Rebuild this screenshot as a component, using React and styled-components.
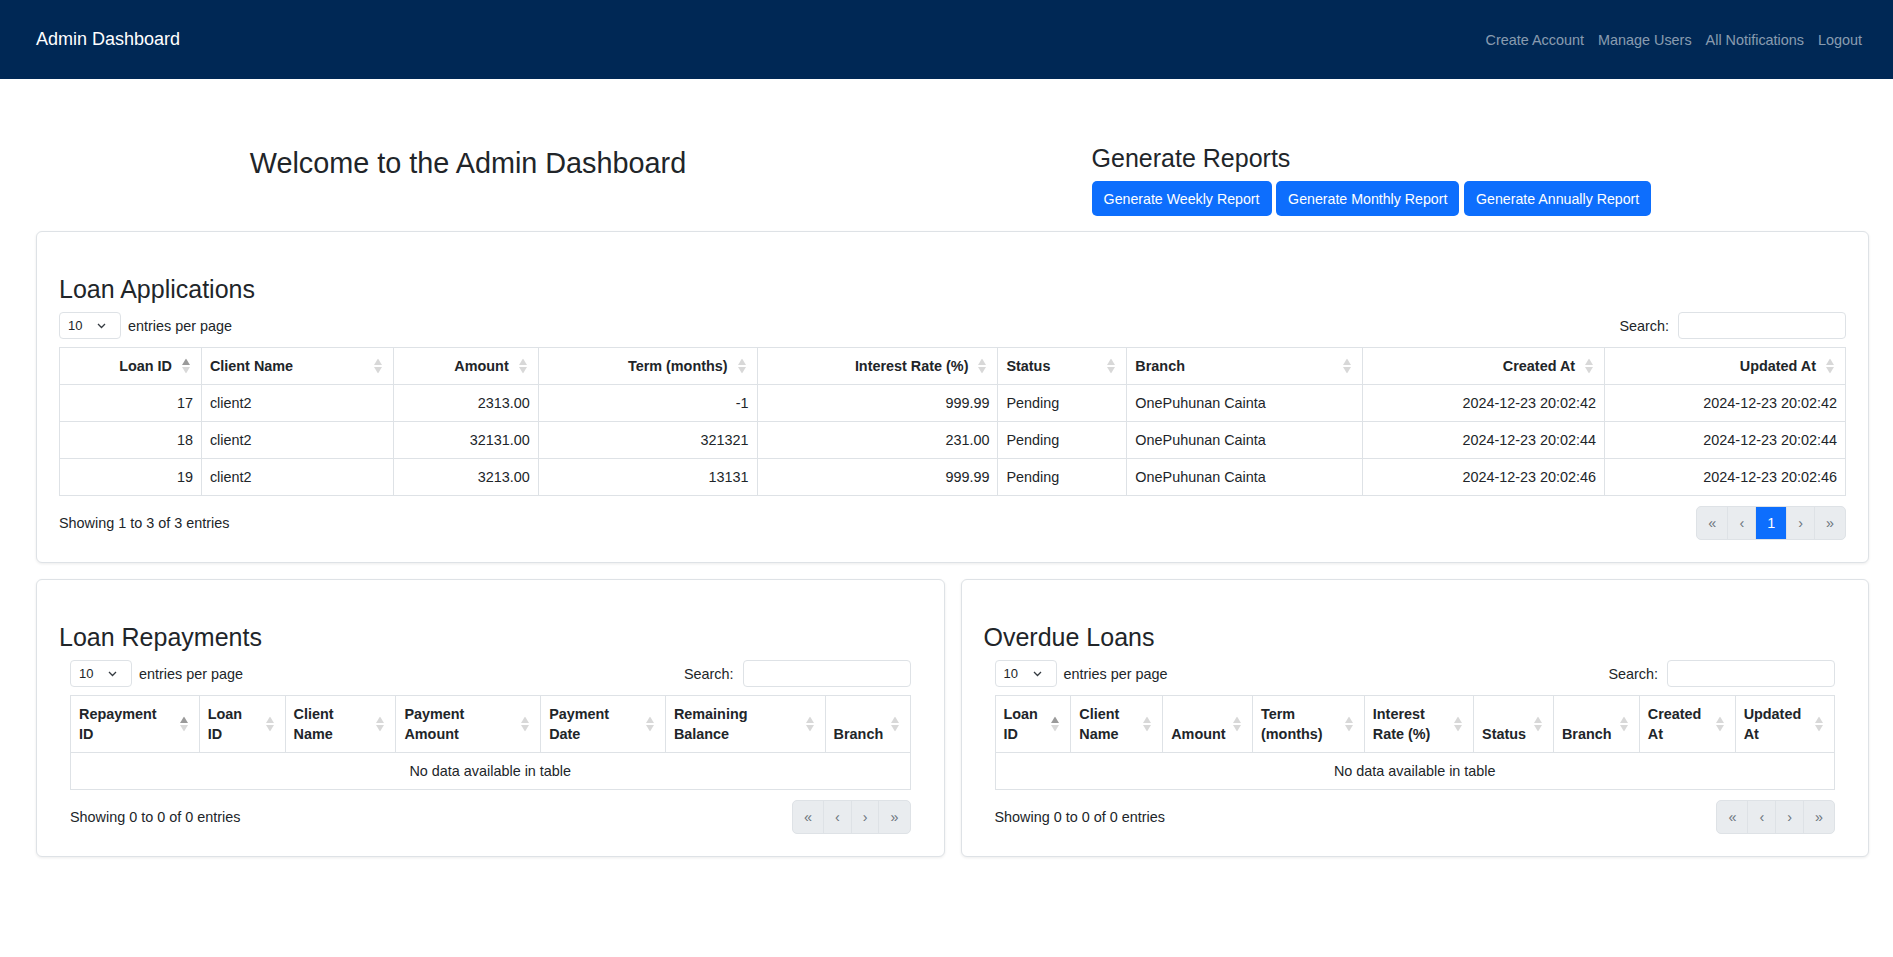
import React from 'react';
import styled, { createGlobalStyle } from 'styled-components';

const GlobalStyle = createGlobalStyle`
  * { box-sizing: border-box; }
  body {
    margin: 0;
    background: #fff;
    color: #212529;
    font-family: "Liberation Sans", Arial, sans-serif;
  }
`;

const Navbar = styled.nav`
  height: 79px;
  background: #002855;
  display: flex;
  align-items: center;
  justify-content: space-between;
  padding: 0 24px 0 36px;
`;

const Brand = styled.span`
  color: #fff;
  font-size: 18px;
`;

const NavLinks = styled.div`
  display: flex;
`;

const NavLink = styled.a`
  color: rgba(255, 255, 255, 0.55);
  font-size: 14.4px;
  padding: 0 7px;
  text-decoration: none;
`;

const Main = styled.main`
  padding: 64px 24px 40px 36px;
`;

const Hero = styled.section`
  display: flex;
  justify-content: space-around;
  align-items: flex-start;
  padding: 0 15px 0 11px;
`;

const Welcome = styled.h2`
  margin: 3px 0 0;
  font-size: 28.8px;
  font-weight: 400;
  line-height: 1.2;
`;

const ReportsTitle = styled.h3`
  margin: 0 0 8px;
  font-size: 25px;
  font-weight: 400;
  line-height: 1.2;
`;

const ButtonRow = styled.div`
  display: flex;
  gap: 4.6px;
`;

const ReportButton = styled.button`
  height: 35px;
  padding: 0 12px;
  border: none;
  border-radius: 5px;
  background: #0d6efd;
  color: #fff;
  font-family: inherit;
  font-size: 14.2px;
  cursor: pointer;
`;

const Card = styled.section`
  min-width: 0;
  background: #fff;
  border: 1px solid #dee2e6;
  border-radius: 6px;
  box-shadow: 0 1px 3px rgba(0, 0, 0, 0.08);
  padding: 22px;
  margin-top: 15px;
`;

const CardGrid = styled.div`
  display: grid;
  grid-template-columns: minmax(0, 1fr) minmax(0, 1fr);
  gap: 16px;
  margin-top: 16px;

  & > ${Card} {
    margin-top: 0;
  }
`;

const CardTitle = styled.h3`
  margin: 20px 0 8px;
  font-size: 25px;
  font-weight: 400;
  line-height: 1.2;
`;

const TableWrap = styled.div`
  padding: 0 ${({ $inset }) => ($inset ? '11px' : '0')};
  font-size: 14.4px;
`;

const Controls = styled.div`
  display: flex;
  justify-content: space-between;
  align-items: center;
  height: 27px;
`;

const LengthBox = styled.div`
  display: flex;
  align-items: center;
  gap: 7px;
`;

const SelectBox = styled.div`
  width: 62px;
  height: 27px;
  border: 1px solid #dee2e6;
  border-radius: 4px;
  display: flex;
  align-items: center;
  justify-content: space-between;
  padding: 0 14px 0 8px;
  font-size: 13px;
`;

const SearchBox = styled.label`
  display: flex;
  align-items: center;
  gap: 9px;
`;

const SearchInput = styled.input`
  width: 168px;
  height: 27px;
  border: 1px solid #dee2e6;
  border-radius: 4px;
  outline: none;
`;

const Table = styled.table`
  width: 100%;
  margin-top: 8px;
  border-collapse: collapse;
  table-layout: fixed;
`;

const Th = styled.th`
  position: relative;
  padding: 8px 29px 8px 8px;
  border: 1px solid #dee2e6;
  text-align: ${({ $align }) => $align};
  vertical-align: bottom;
  font-weight: 700;
  line-height: 20px;
`;

const SortIcon = styled.svg`
  position: absolute;
  right: 11px;
  top: 50%;
  transform: translateY(-50%);
`;

const Td = styled.td`
  padding: 8px;
  border: 1px solid #dee2e6;
  text-align: ${({ $align }) => $align || 'left'};
  line-height: 20px;
  white-space: nowrap;
`;

const Footer = styled.div`
  display: flex;
  justify-content: space-between;
  align-items: center;
  margin-top: 10px;
`;

const Pager = styled.div`
  display: flex;
  height: 34px;
  background: #e9ecef;
  border: 1px solid #dee2e6;
  border-radius: 5px;
  overflow: hidden;
`;

const PageItem = styled.span`
  display: flex;
  align-items: center;
  padding: 0 11px;
  color: ${({ $active }) => ($active ? '#fff' : '#6c757d')};
  background: ${({ $active }) => ($active ? '#0d6efd' : 'transparent')};

  & + & {
    border-left: 1px solid #dee2e6;
  }
`;

const Sorter = ({ asc }) => (
  <SortIcon width="8" height="15" viewBox="0 0 8 15">
    <polygon points="0,6.5 4,0 8,6.5" fill={asc ? '#9a9a9a' : '#d8d8d8'} />
    <polygon points="0,8.5 4,15 8,8.5" fill="#d8d8d8" />
  </SortIcon>
);

const Chevron = () => (
  <svg width="9" height="6" viewBox="0 0 9 6">
    <path d="M1 1l3.5 3.5L8 1" fill="none" stroke="#343a40" strokeWidth="1.3" />
  </svg>
);

const DataTable = ({ columns, rows, inset, pages }) => {
  const total = rows.length;
  const sum = columns.reduce((s, c) => s + c.w, 0);
  return (
    <TableWrap $inset={inset}>
      <Controls>
        <LengthBox>
          <SelectBox>
            10
            <Chevron />
          </SelectBox>
          entries per page
        </LengthBox>
        <SearchBox>
          Search:
          <SearchInput type="search" />
        </SearchBox>
      </Controls>
      <Table>
        <colgroup>
          {columns.map((c) => (
            <col key={c.label} style={{ width: `${(c.w / sum) * 100}%` }} />
          ))}
        </colgroup>
        <thead>
          <tr>
            {columns.map((c, i) => (
              <Th key={c.label} $align={c.align}>
                {c.label}
                <Sorter asc={i === 0} />
              </Th>
            ))}
          </tr>
        </thead>
        <tbody>
          {total === 0 ? (
            <tr>
              <Td colSpan={columns.length} $align="center">
                No data available in table
              </Td>
            </tr>
          ) : (
            rows.map((r) => (
              <tr key={r[0]}>
                {r.map((v, i) => (
                  <Td key={i} $align={columns[i].align}>
                    {v}
                  </Td>
                ))}
              </tr>
            ))
          )}
        </tbody>
      </Table>
      <Footer>
        <span>
          Showing {total ? 1 : 0} to {total} of {total} entries
        </span>
        <Pager>
          <PageItem>«</PageItem>
          <PageItem>‹</PageItem>
          {pages && <PageItem $active>1</PageItem>}
          <PageItem>›</PageItem>
          <PageItem>»</PageItem>
        </Pager>
      </Footer>
    </TableWrap>
  );
};

const loanColumns = [
  { label: 'Loan ID', w: 142, align: 'right' },
  { label: 'Client Name', w: 192, align: 'left' },
  { label: 'Amount', w: 145, align: 'right' },
  { label: 'Term (months)', w: 219, align: 'right' },
  { label: 'Interest Rate (%)', w: 241, align: 'right' },
  { label: 'Status', w: 129, align: 'left' },
  { label: 'Branch', w: 236, align: 'left' },
  { label: 'Created At', w: 242, align: 'right' },
  { label: 'Updated At', w: 241, align: 'right' },
];

const loanRows = [
  ['17', 'client2', '2313.00', '-1', '999.99', 'Pending', 'OnePuhunan Cainta', '2024-12-23 20:02:42', '2024-12-23 20:02:42'],
  ['18', 'client2', '32131.00', '321321', '231.00', 'Pending', 'OnePuhunan Cainta', '2024-12-23 20:02:44', '2024-12-23 20:02:44'],
  ['19', 'client2', '3213.00', '13131', '999.99', 'Pending', 'OnePuhunan Cainta', '2024-12-23 20:02:46', '2024-12-23 20:02:46'],
];

const repaymentColumns = [
  { label: 'Repayment ID', w: 129, align: 'left' },
  { label: 'Loan ID', w: 86, align: 'left' },
  { label: 'Client Name', w: 111, align: 'left' },
  { label: 'Payment Amount', w: 145, align: 'left' },
  { label: 'Payment Date', w: 125, align: 'left' },
  { label: 'Remaining Balance', w: 160, align: 'left' },
  { label: 'Branch', w: 85, align: 'left' },
];

const overdueColumns = [
  { label: 'Loan ID', w: 76, align: 'left' },
  { label: 'Client Name', w: 92, align: 'left' },
  { label: 'Amount', w: 90, align: 'left' },
  { label: 'Term (months)', w: 112, align: 'left' },
  { label: 'Interest Rate (%)', w: 109.5, align: 'left' },
  { label: 'Status', w: 80, align: 'left' },
  { label: 'Branch', w: 86, align: 'left' },
  { label: 'Created At', w: 96, align: 'left' },
  { label: 'Updated At', w: 99.5, align: 'left' },
];

const App = () => (
  <>
    <GlobalStyle />
    <Navbar>
      <Brand>Admin Dashboard</Brand>
      <NavLinks>
        <NavLink href="#">Create Account</NavLink>
        <NavLink href="#">Manage Users</NavLink>
        <NavLink href="#">All Notifications</NavLink>
        <NavLink href="#">Logout</NavLink>
      </NavLinks>
    </Navbar>
    <Main>
      <Hero>
        <Welcome>Welcome to the Admin Dashboard</Welcome>
        <div>
          <ReportsTitle>Generate Reports</ReportsTitle>
          <ButtonRow>
            <ReportButton>Generate Weekly Report</ReportButton>
            <ReportButton>Generate Monthly Report</ReportButton>
            <ReportButton>Generate Annually Report</ReportButton>
          </ButtonRow>
        </div>
      </Hero>

      <Card>
        <CardTitle>Loan Applications</CardTitle>
        <DataTable columns={loanColumns} rows={loanRows} pages />
      </Card>

      <CardGrid>
        <Card>
          <CardTitle>Loan Repayments</CardTitle>
          <DataTable columns={repaymentColumns} rows={[]} inset />
        </Card>
        <Card>
          <CardTitle>Overdue Loans</CardTitle>
          <DataTable columns={overdueColumns} rows={[]} inset />
        </Card>
      </CardGrid>
    </Main>
  </>
);

export default App;
